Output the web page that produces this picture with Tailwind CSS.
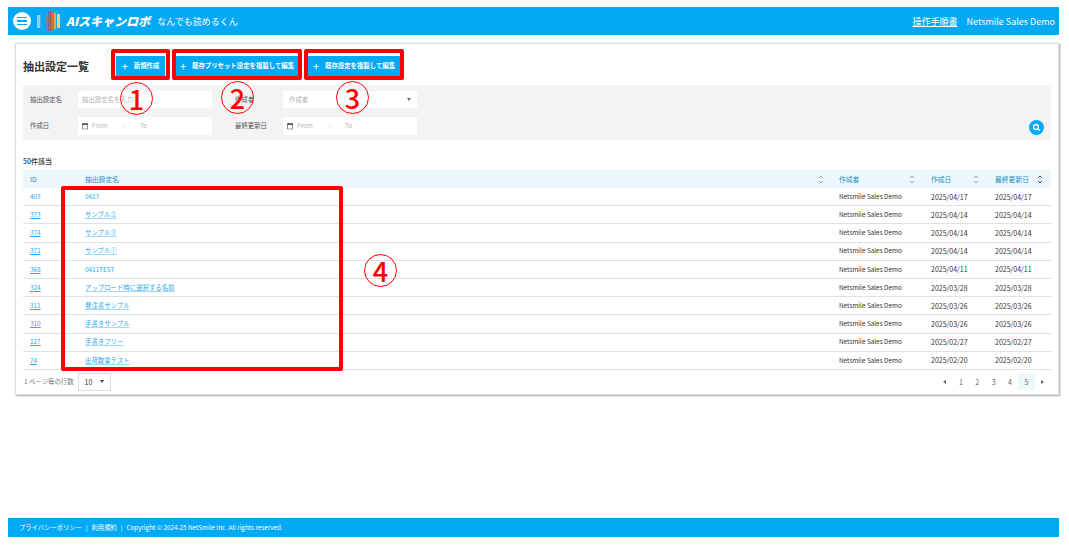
<!DOCTYPE html>
<html lang="ja">
<head>
<meta charset="utf-8">
<script src="https://cdn.jsdelivr.net/npm/@tailwindcss/browser@4"></script>
</head>
<body class="bg-white font-['Noto_Sans_CJK_JP','Noto_Sans',sans-serif] text-[#333]">
<div class="relative w-[1069px] h-[545px] overflow-hidden flex flex-col pl-[8px] pr-[10px] pt-[7px]">

  <header class="h-[28px] shrink-0 bg-[#03a9f4] flex items-center pl-[5px] pr-[4px] text-white">
    <div class="w-[18px] h-[18px] rounded-full bg-white flex flex-col items-center justify-center gap-[2px]">
      <span class="block w-[10px] h-[1.5px] bg-[#03a9f4]"></span>
      <span class="block w-[10px] h-[1.5px] bg-[#03a9f4]"></span>
      <span class="block w-[10px] h-[1.5px] bg-[#03a9f4]"></span>
    </div>
    <svg class="ml-[6px]" width="25" height="22" viewBox="0 0 25 22">
      <rect x="0" y="5" width="3" height="13" fill="#8fd3f4"/>
      <rect x="3" y="4" width="2" height="14" fill="#5aa6d6" opacity="0.7"/>
      <rect x="9" y="3" width="1" height="16" fill="#7f8fa0"/>
      <rect x="11" y="1" width="1" height="20" fill="#6d6f85"/>
      <rect x="13" y="1" width="1" height="20" fill="#a2574f"/>
      <rect x="15" y="2" width="1" height="18" fill="#c7803a"/>
      <rect x="17" y="3" width="2" height="16" fill="#e0b04a"/>
      <rect x="20" y="4" width="3" height="14" fill="#efd27a"/>
    </svg>
    <span class="ml-[4px] text-[12px] leading-none font-black italic whitespace-nowrap">AIスキャンロボ</span>
    <span class="ml-[7px] text-[9px] leading-none whitespace-nowrap">なんでも読めるくん</span>
    <a class="ml-auto text-[9px] leading-none underline whitespace-nowrap">操作手順書</a>
    <span class="ml-[9px] text-[9px] leading-none whitespace-nowrap">Netsmile Sales Demo</span>
  </header>

  <main class="mt-[8px] ml-[7px] h-[352px] shrink-0 bg-white border border-[#dcdcdc] shadow-[1px_1px_2px_rgba(0,0,0,0.35)] px-[7px] flex flex-col">
    <div class="h-[41px] shrink-0 flex items-center pt-[3px]">
      <h1 class="text-[11px] font-bold leading-none w-[93px] whitespace-nowrap">抽出設定一覧</h1>
      <button class="w-[49px] h-[20px] bg-[#03a9f4] text-white text-[6.4px] font-bold flex items-center justify-center gap-[6px] shadow-[0_1px_1px_rgba(0,0,0,0.3)] whitespace-nowrap"><span class="text-[11px] leading-none font-normal">+</span>新規作成</button>
      <button class="ml-[11px] w-[122px] h-[20px] bg-[#03a9f4] text-white text-[6.4px] font-bold flex items-center justify-center gap-[6px] shadow-[0_1px_1px_rgba(0,0,0,0.3)] whitespace-nowrap"><span class="text-[11px] leading-none font-normal">+</span>既存プリセット設定を複製して編集</button>
      <button class="ml-[10px] w-[92px] h-[20px] bg-[#03a9f4] text-white text-[6.4px] font-bold flex items-center justify-center gap-[6px] shadow-[0_1px_1px_rgba(0,0,0,0.3)] whitespace-nowrap"><span class="text-[11px] leading-none font-normal">+</span>既存設定を複製して編集</button>
    </div>

    <section class="h-[55px] shrink-0 bg-[#f3f3f3] relative pt-[6px] pl-[7px] flex flex-col gap-[9px] text-[6.4px] text-[#555]">
      <div class="flex items-center h-[17px]">
        <span class="w-[48px] whitespace-nowrap">抽出設定名</span>
        <div class="w-[134px] h-[17px] bg-white flex items-center px-[4px] text-[#b5b5b5] whitespace-nowrap">抽出設定名を入力</div>
        <span class="ml-[23px] w-[48px] whitespace-nowrap">作成者</span>
        <div class="w-[134px] h-[17px] bg-white flex items-center justify-between pl-[6px] pr-[6px] text-[#b5b5b5]"><span>作成者</span><span class="w-0 h-0 border-x-[2.5px] border-x-transparent border-t-[3px] border-t-[#666]"></span></div>
      </div>
      <div class="flex items-center h-[17px]">
        <span class="w-[48px] whitespace-nowrap">作成日</span>
        <div class="w-[134px] h-[18px] bg-white flex items-center pl-[3px] text-[#b5b5b5]">
          <svg width="8" height="8" viewBox="0 0 24 24" fill="#555"><path d="M19 4h-1V2h-2v2H8V2H6v2H5a2 2 0 0 0-2 2v14a2 2 0 0 0 2 2h14a2 2 0 0 0 2-2V6a2 2 0 0 0-2-2zm0 16H5V9h14z"/></svg>
          <span class="ml-[3px] w-[31px]">From</span><span class="w-[17px]">-</span><span>To</span>
        </div>
        <span class="ml-[23px] w-[48px] whitespace-nowrap">最終更新日</span>
        <div class="w-[134px] h-[18px] bg-white flex items-center pl-[3px] text-[#b5b5b5]">
          <svg width="8" height="8" viewBox="0 0 24 24" fill="#555"><path d="M19 4h-1V2h-2v2H8V2H6v2H5a2 2 0 0 0-2 2v14a2 2 0 0 0 2 2h14a2 2 0 0 0 2-2V6a2 2 0 0 0-2-2zm0 16H5V9h14z"/></svg>
          <span class="ml-[3px] w-[31px]">From</span><span class="w-[17px]">-</span><span>To</span>
        </div>
      </div>
      <button class="absolute right-[7px] bottom-[5px] w-[15px] h-[15px] rounded-full bg-[#03a9f4] flex items-center justify-center">
        <svg width="9" height="9" viewBox="0 0 24 24" fill="none" stroke="#fff" stroke-width="3.5"><circle cx="10.5" cy="10.5" r="6.5"/><path d="M15.5 15.5 21 21"/></svg>
      </button>
    </section>

    <div class="h-[30px] shrink-0 flex items-end pb-[5px] text-[7px] font-medium leading-none text-[#333]">50件該当</div>

    <div class="text-[6.4px] leading-none">
      <div class="h-[18px] text-[6.8px] bg-[#edf8fd] flex items-center text-[#1d8ec4]">
        <span class="w-[62px] pl-[7px]">ID</span>
        <span class="w-[733px] whitespace-nowrap">抽出設定名</span>
        <span class="w-[21px]"><svg width="6" height="9" viewBox="0 0 6 9" fill="none" stroke="#8a8a8a" stroke-width="0.8"><path d="M1 3 3 1l2 2M1 6l2 2 2-2"/></svg></span>
        <span class="w-[70px] whitespace-nowrap">作成者</span>
        <span class="w-[22px]"><svg width="6" height="9" viewBox="0 0 6 9" fill="none" stroke="#8a8a8a" stroke-width="0.8"><path d="M1 3 3 1l2 2M1 6l2 2 2-2"/></svg></span>
        <span class="w-[42px] whitespace-nowrap">作成日</span>
        <span class="w-[22px]"><svg width="6" height="9" viewBox="0 0 6 9" fill="none" stroke="#8a8a8a" stroke-width="0.8"><path d="M1 3 3 1l2 2M1 6l2 2 2-2"/></svg></span>
        <span class="w-[42px] whitespace-nowrap">最終更新日</span>
        <span><svg width="6" height="9" viewBox="0 0 6 9" fill="none" stroke="#444" stroke-width="0.9"><path d="M1 3 3 1l2 2M1 6l2 2 2-2"/></svg></span>
      </div>

      <div class="h-[18.2px] pt-[1px] border-b border-[#e0e0e0] flex items-center"><a class="w-[62px] pl-[7px] text-[#29a9e8]">403</a><a class="w-[754px] text-[#29a9e8]">0417</a><span class="w-[92px] whitespace-nowrap">Netsmile Sales Demo</span><span class="w-[64px] text-[7px]">2025/04/17</span><span class="text-[7px]">2025/04/17</span></div>
      <div class="h-[18.2px] pt-[1px] border-b border-[#e0e0e0] flex items-center"><a class="w-[62px] pl-[7px] text-[#29a9e8] underline">373</a><a class="w-[754px] text-[#29a9e8] underline decoration-[#9fdcf8]">サンプル②</a><span class="w-[92px] whitespace-nowrap">Netsmile Sales Demo</span><span class="w-[64px] text-[7px]">2025/04/14</span><span class="text-[7px]">2025/04/14</span></div>
      <div class="h-[18.2px] pt-[1px] border-b border-[#e0e0e0] flex items-center"><a class="w-[62px] pl-[7px] text-[#29a9e8] underline">374</a><a class="w-[754px] text-[#29a9e8] underline decoration-[#9fdcf8]">サンプル③</a><span class="w-[92px] whitespace-nowrap">Netsmile Sales Demo</span><span class="w-[64px] text-[7px]">2025/04/14</span><span class="text-[7px]">2025/04/14</span></div>
      <div class="h-[18.2px] pt-[1px] border-b border-[#e0e0e0] flex items-center"><a class="w-[62px] pl-[7px] text-[#29a9e8] underline">371</a><a class="w-[754px] text-[#29a9e8] underline decoration-[#9fdcf8]">サンプル①</a><span class="w-[92px] whitespace-nowrap">Netsmile Sales Demo</span><span class="w-[64px] text-[7px]">2025/04/14</span><span class="text-[7px]">2025/04/14</span></div>
      <div class="h-[18.2px] pt-[1px] border-b border-[#e0e0e0] flex items-center"><a class="w-[62px] pl-[7px] text-[#29a9e8] underline">368</a><a class="w-[754px] text-[#29a9e8]">0411TEST</a><span class="w-[92px] whitespace-nowrap">Netsmile Sales Demo</span><span class="w-[64px] text-[7px]">2025/04/11</span><span class="text-[7px]">2025/04/11</span></div>
      <div class="h-[18.2px] pt-[1px] border-b border-[#e0e0e0] flex items-center"><a class="w-[62px] pl-[7px] text-[#29a9e8] underline">324</a><a class="w-[754px] text-[#29a9e8] underline decoration-[#9fdcf8]">アップロード時に選択する名前</a><span class="w-[92px] whitespace-nowrap">Netsmile Sales Demo</span><span class="w-[64px] text-[7px]">2025/03/28</span><span class="text-[7px]">2025/03/28</span></div>
      <div class="h-[18.2px] pt-[1px] border-b border-[#e0e0e0] flex items-center"><a class="w-[62px] pl-[7px] text-[#29a9e8] underline">311</a><a class="w-[754px] text-[#29a9e8] underline decoration-[#9fdcf8]">発注書サンプル</a><span class="w-[92px] whitespace-nowrap">Netsmile Sales Demo</span><span class="w-[64px] text-[7px]">2025/03/26</span><span class="text-[7px]">2025/03/26</span></div>
      <div class="h-[18.2px] pt-[1px] border-b border-[#e0e0e0] flex items-center"><a class="w-[62px] pl-[7px] text-[#29a9e8] underline">310</a><a class="w-[754px] text-[#29a9e8] underline decoration-[#9fdcf8]">手書きサンプル</a><span class="w-[92px] whitespace-nowrap">Netsmile Sales Demo</span><span class="w-[64px] text-[7px]">2025/03/26</span><span class="text-[7px]">2025/03/26</span></div>
      <div class="h-[18.2px] pt-[1px] border-b border-[#e0e0e0] flex items-center"><a class="w-[62px] pl-[7px] text-[#29a9e8] underline">127</a><a class="w-[754px] text-[#29a9e8] underline decoration-[#9fdcf8]">手書きフリー</a><span class="w-[92px] whitespace-nowrap">Netsmile Sales Demo</span><span class="w-[64px] text-[7px]">2025/02/27</span><span class="text-[7px]">2025/02/27</span></div>
      <div class="h-[18.2px] pt-[1px] border-b border-[#e0e0e0] flex items-center"><a class="w-[62px] pl-[7px] text-[#29a9e8] underline">74</a><a class="w-[754px] text-[#29a9e8] underline decoration-[#9fdcf8]">出荷数量テスト</a><span class="w-[92px] whitespace-nowrap">Netsmile Sales Demo</span><span class="w-[64px] text-[7px]">2025/02/20</span><span class="text-[7px]">2025/02/20</span></div>
    </div>

    <div class="flex items-center h-[24px] text-[6.4px] text-[#777] pl-[1px]">
      <span class="whitespace-nowrap">1 ページ毎の行数</span>
      <div class="ml-[4px] w-[33px] h-[18px] border border-[#ddd] flex items-center justify-between px-[6px] text-[#333] text-[7px]"><span>10</span><span class="w-0 h-0 border-x-[2.5px] border-x-transparent border-t-[3px] border-t-[#444]"></span></div>
      <div class="ml-auto flex items-center text-[#666] text-[7px]">
        <span class="w-[16.4px] h-[16px] flex items-center justify-center"><span class="w-0 h-0 border-y-[2.5px] border-y-transparent border-r-[3px] border-r-[#666]"></span></span>
        <span class="w-[16.4px] h-[16px] flex items-center justify-center">1</span>
        <span class="w-[16.4px] h-[16px] flex items-center justify-center">2</span>
        <span class="w-[16.4px] h-[16px] flex items-center justify-center">3</span>
        <span class="w-[16.4px] h-[16px] flex items-center justify-center">4</span>
        <span class="w-[16.4px] h-[16px] flex items-center justify-center bg-[#edf8fd]">5</span>
        <span class="w-[16.4px] h-[16px] flex items-center justify-center"><span class="w-0 h-0 border-y-[2.5px] border-y-transparent border-l-[3px] border-l-[#666]"></span></span>
      </div>
    </div>
  </main>

  <footer class="mt-auto mb-[8px] h-[19px] shrink-0 bg-[#03a9f4] text-white text-[6.3px] flex items-center pl-[11px] whitespace-nowrap">
    <span>プライバシーポリシー</span><span class="mx-[4px]">|</span><span>利用規約</span><span class="mx-[4px]">|</span><span>Copyright © 2024-25 NetSmile Inc. All rights reserved.</span>
  </footer>

  <!-- annotations drawn over the screenshot -->
  <div class="absolute left-[111px] top-[49px] w-[59px] h-[31px] border-[4px] border-[#ff0000] rounded-[2px]"></div>
  <div class="absolute left-[172px] top-[49px] w-[130px] h-[31px] border-[4px] border-[#ff0000] rounded-[2px]"></div>
  <div class="absolute left-[304px] top-[49px] w-[100px] h-[31px] border-[4px] border-[#ff0000] rounded-[2px]"></div>
  <div class="absolute left-[61px] top-[186px] w-[282px] h-[185px] border-[4px] border-[#ff0000] rounded-[2px]"></div>

  <div class="absolute left-[120px] top-[82px] w-[33px] h-[33px] rounded-full border border-[#ff0000] text-[#ff0000] text-[27px] font-medium leading-none flex items-center justify-center">1</div>
  <div class="absolute left-[221px] top-[81px] w-[33px] h-[33px] rounded-full border border-[#ff0000] text-[#ff0000] text-[27px] font-medium leading-none flex items-center justify-center">2</div>
  <div class="absolute left-[336px] top-[81px] w-[33px] h-[33px] rounded-full border border-[#ff0000] text-[#ff0000] text-[27px] font-medium leading-none flex items-center justify-center">3</div>
  <div class="absolute left-[364px] top-[254px] w-[33px] h-[33px] rounded-full border border-[#ff0000] text-[#ff0000] text-[27px] font-medium leading-none flex items-center justify-center">4</div>
</div>
</body>
</html>
